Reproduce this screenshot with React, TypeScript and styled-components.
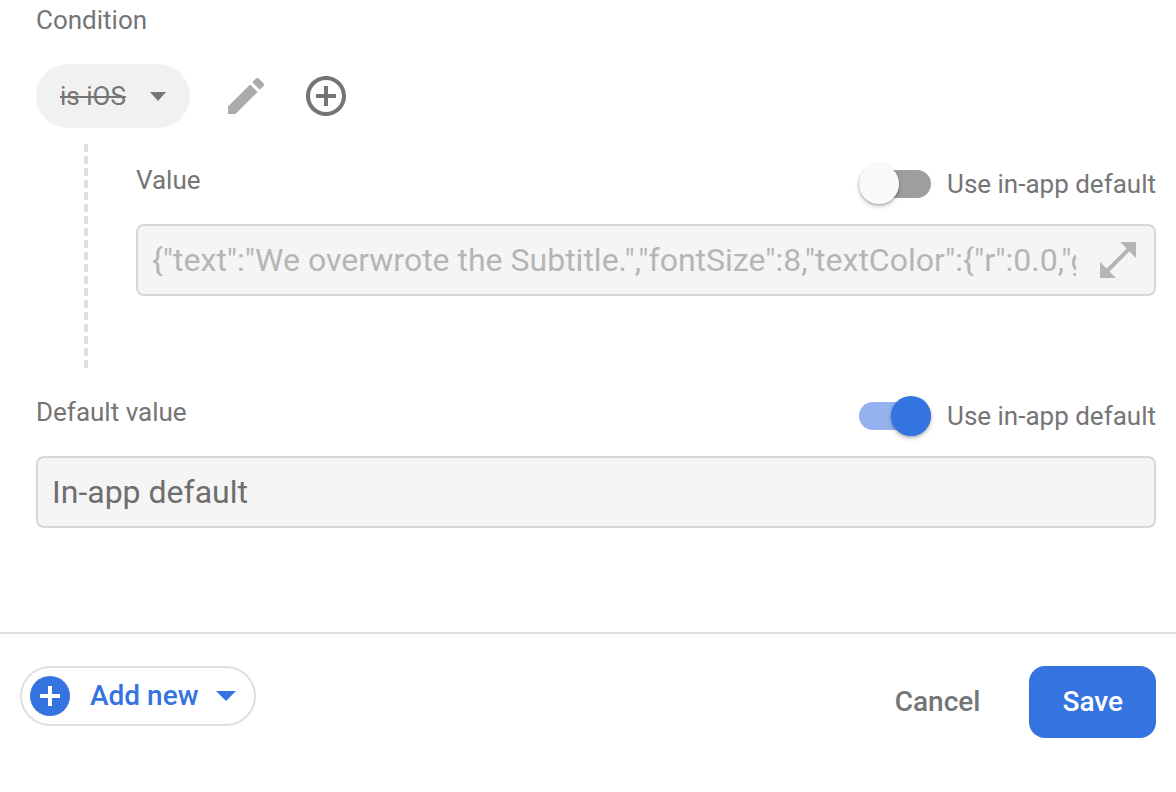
import React, { useState } from "react";
import styled, { createGlobalStyle } from "styled-components";

const blue = "#3473e0";
const grey = "#757575";
const line = "#e0e0e0";

const GlobalStyle = createGlobalStyle`
  *, *::before { box-sizing: border-box; }
  body {
    margin: 0;
    background: #fff;
    color: ${grey};
    font-family: Roboto, "Liberation Sans", sans-serif;
    font-size: 26px;
    line-height: 32px;
  }
  button, input { font: inherit; color: inherit; }
`;

const Form = styled.form`
  padding-top: 4px;
`;

const Body = styled.div`
  padding: 0 20px 104px 36px;
`;

const ConditionRow = styled.div`
  display: flex;
  align-items: center;
  gap: 32px;
  margin-top: 28px;
`;

const Chip = styled.button`
  display: flex;
  align-items: center;
  gap: 24px;
  height: 64px;
  padding: 0 24px;
  border: 0;
  border-radius: 32px;
  background: #f1f1f1;
  cursor: pointer;
`;

const IconButton = styled.button<{ $tone?: string }>`
  display: flex;
  flex: none;
  padding: 0;
  border: 0;
  background: none;
  color: ${(p) => p.$tone ?? grey};
  cursor: pointer;
`;

const Nested = styled.div`
  display: flex;
  gap: 48px;
  min-height: 224px;
  margin-top: 16px;
  padding-left: 48px;
`;

const DashedLine = styled.div`
  flex: none;
  width: 4px;
  background: repeating-linear-gradient(${line} 0 8px, transparent 8px 12px);
`;

const ValueGroup = styled.div<{ $top: number }>`
  flex: 1;
  min-width: 0;
  padding-top: ${(p) => p.$top}px;
`;

const GroupHeader = styled.div`
  display: flex;
  justify-content: space-between;
  align-items: flex-start;
  margin-bottom: 20px;
`;

const SwitchLabel = styled.label`
  display: flex;
  align-items: center;
  gap: 16px;
  height: 40px;
  cursor: pointer;
`;

const Switch = styled.input`
  appearance: none;
  display: flex;
  align-items: center;
  width: 72px;
  height: 28px;
  margin: 0;
  border-radius: 14px;
  background: #9e9e9e;
  cursor: pointer;

  &::before {
    content: "";
    flex: none;
    width: 40px;
    height: 40px;
    border-radius: 50%;
    background: #fafafa;
    box-shadow: 0 2px 4px rgba(0, 0, 0, 0.26), 0 1px 2px rgba(0, 0, 0, 0.14);
  }
  &:checked {
    justify-content: flex-end;
    background: #93b2ef;
  }
  &:checked::before {
    background: ${blue};
  }
`;

const Field = styled.div`
  display: flex;
  align-items: center;
  gap: 18px;
  height: 72px;
  padding: 0 12px 0 14px;
  border: 2px solid #d6d6d6;
  border-radius: 8px;
  background: #f5f5f5;
`;

const FieldInput = styled.input<{ $muted?: boolean }>`
  flex: 1;
  min-width: 0;
  height: 48px;
  padding: 0;
  border: 0;
  outline: 0;
  background: none;
  font-size: 32px;
  color: ${(p) => (p.$muted ? "#b5b5b5" : "#6e6e6e")};
`;

const Footer = styled.footer`
  display: flex;
  justify-content: space-between;
  align-items: flex-start;
  padding: 32px 20px;
  border-top: 2px solid ${line};
  font-size: 28px;
  font-weight: 500;
`;

const AddButton = styled.button`
  display: flex;
  align-items: center;
  height: 60px;
  padding: 0 18px 0 8px;
  border: 2px solid ${line};
  border-radius: 30px;
  background: none;
  color: ${blue};
  cursor: pointer;
`;

const AddText = styled.span`
  padding: 0 18px 0 20px;
`;

const Actions = styled.div`
  display: flex;
  gap: 16px;
`;

const ActionButton = styled.button<{ $primary?: boolean }>`
  height: 72px;
  padding: 0 33px;
  border: 0;
  border-radius: 16px;
  background: ${(p) => (p.$primary ? blue : "none")};
  color: ${(p) => (p.$primary ? "#fff" : grey)};
  cursor: pointer;
`;

const Caret = ({ width, height }: { width: number; height: number }) => (
  <svg width={width} height={height} viewBox="0 0 20 10" preserveAspectRatio="none" fill="currentColor" aria-hidden="true">
    <path d="M0 0h20L10 10z" />
  </svg>
);

const Glyph = ({ d }: { d: string }) => (
  <svg width="48" height="48" viewBox="0 0 24 24" fill="currentColor" aria-hidden="true">
    <path d={d} />
  </svg>
);

const PENCIL =
  "M3 17.25V21h3.75L17.81 9.94l-3.75-3.75L3 17.25zM20.71 7.04a.996.996 0 0 0 0-1.41l-2.34-2.34a.996.996 0 0 0-1.41 0l-1.83 1.83 3.75 3.75 1.83-1.83z";
const PLUS_RING =
  "M13 7h-2v4H7v2h4v4h2v-4h4v-2h-4V7zm-1-5C6.49 2 2 6.49 2 12s4.49 10 10 10 10-4.49 10-10S17.51 2 12 2zm0 18c-4.41 0-8-3.59-8-8s3.59-8 8-8 8 3.59 8 8-3.59 8-8 8z";
const EXPAND = "M21 11V3h-8l3.29 3.29-10 10L3 13v8h8l-3.29-3.29 10-10z";

const DefaultSwitch = ({ initial }: { initial: boolean }) => {
  const [on, setOn] = useState(initial);
  return (
    <SwitchLabel>
      <Switch type="checkbox" role="switch" checked={on} onChange={(e) => setOn(e.target.checked)} />
      Use in-app default
    </SwitchLabel>
  );
};

export default function App() {
  return (
    <>
      <GlobalStyle />
      <Form onSubmit={(e) => e.preventDefault()}>
        <Body>
          <div id="condition-label">Condition</div>
          <ConditionRow role="group" aria-labelledby="condition-label">
            <Chip type="button" aria-haspopup="menu">
              <s>is iOS</s>
              <Caret width={16} height={9} />
            </Chip>
            <IconButton type="button" $tone="#ababab" aria-label="Edit condition">
              <Glyph d={PENCIL} />
            </IconButton>
            <IconButton type="button" aria-label="Add condition">
              <Glyph d={PLUS_RING} />
            </IconButton>
          </ConditionRow>

          <Nested>
            <DashedLine />
            <ValueGroup $top={20}>
              <GroupHeader>
                <label htmlFor="value">Value</label>
                <DefaultSwitch initial={false} />
              </GroupHeader>
              <Field>
                <FieldInput
                  id="value"
                  $muted
                  readOnly
                  value={'{"text":"We overwrote the Subtitle.","fontSize":8,"textColor":{"r":0.0,"g":0.0}}'}
                />
                <IconButton type="button" $tone="#b5b5b5" aria-label="Expand editor">
                  <Glyph d={EXPAND} />
                </IconButton>
              </Field>
            </ValueGroup>
          </Nested>

          <ValueGroup $top={28}>
            <GroupHeader>
              <label htmlFor="default-value">Default value</label>
              <DefaultSwitch initial />
            </GroupHeader>
            <Field>
              <FieldInput id="default-value" readOnly value="In-app default" />
            </Field>
          </ValueGroup>
        </Body>

        <Footer>
          <AddButton type="button" aria-haspopup="menu">
            <svg width="40" height="40" viewBox="0 0 40 40" aria-hidden="true">
              <circle cx="20" cy="20" r="20" fill="currentColor" />
              <path d="M10 20h20M20 10v20" stroke="#fff" strokeWidth="4" />
            </svg>
            <AddText>Add new</AddText>
            <Caret width={20} height={10} />
          </AddButton>
          <Actions>
            <ActionButton type="button">Cancel</ActionButton>
            <ActionButton type="submit" $primary>
              Save
            </ActionButton>
          </Actions>
        </Footer>
      </Form>
    </>
  );
}
